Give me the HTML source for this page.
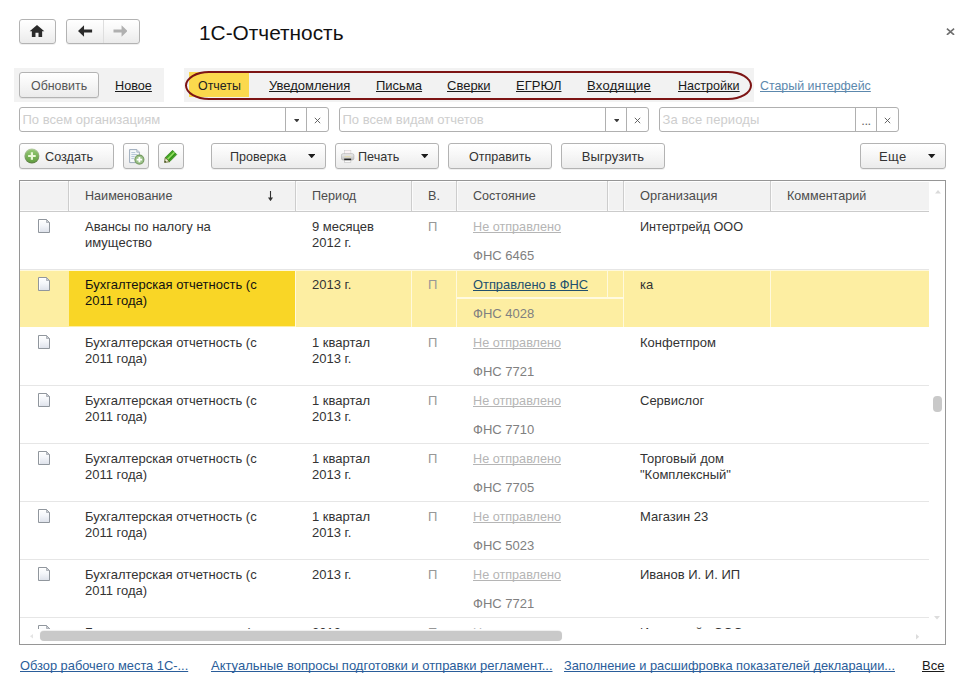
<!DOCTYPE html>
<html lang="ru">
<head>
<meta charset="utf-8">
<title>1С-Отчетность</title>
<style>
html,body{margin:0;padding:0;}
body{width:973px;height:688px;overflow:hidden;background:#fff;position:relative;
  font-family:"Liberation Sans",Arial,sans-serif;font-size:13px;color:#333;}
.abs{position:absolute;}
.sx{display:inline-block;transform-origin:0 50%;}
.btn{position:absolute;box-sizing:border-box;border:1px solid #b3b3b3;border-radius:3px;
  background:linear-gradient(#ffffff 0%,#f7f7f7 45%,#ebebeb 100%);
  box-shadow:0 1px 0 rgba(0,0,0,0.06);color:#333;white-space:nowrap;}
.btn .t{position:absolute;top:1px;line-height:24px;}
.title{position:absolute;left:198.6px;top:21px;font-size:21px;line-height:24px;color:#111;white-space:nowrap;display:inline-block;transform-origin:0 50%;transform:scaleX(.992);}
.strip{position:absolute;background:#f2f2f2;}
.lnk{position:absolute;text-decoration:underline;text-decoration-skip-ink:none;color:#1a1a1a;white-space:nowrap;line-height:16px;}
.inp{position:absolute;box-sizing:border-box;border:1px solid #b0b0b0;border-radius:3px;background:#fff;height:25px;top:107px;}
.inp .ph{position:absolute;left:2.5px;top:-0.5px;line-height:23px;color:#cecece;white-space:nowrap;}
.inp .sep{position:absolute;top:0;bottom:0;width:1px;background:#b0b0b0;}
.inp .g{position:absolute;top:0;line-height:23px;color:#555;text-align:center;}
.tri{position:absolute;width:0;height:0;border-left:3.8px solid transparent;border-right:3.8px solid transparent;border-top:4.4px solid #222;}
/* table */
#tbl{position:absolute;left:19px;top:180px;width:927px;height:465px;box-sizing:border-box;border:1px solid #969696;background:#fff;overflow:hidden;}
#tbl .hd{position:absolute;left:0;top:0;width:909px;height:30px;background:linear-gradient(#fff 0,#fff 1px,#f2f2f2 1px,#f2f2f2 28.6px,#fbfbfb 28.6px,#fbfbfb 100%);border-bottom:1px solid #cbcbcb;}
#tbl .hd span{position:absolute;top:0;line-height:30px;color:#4c4c4c;white-space:nowrap;display:inline-block;transform-origin:0 50%;transform:scaleX(.97);}
#tbl .hd i{position:absolute;top:0;height:30px;width:2px;background:linear-gradient(to right,#cdcdcd 50%,#fbfbfb 50%);}
.row{position:absolute;left:0;width:909px;height:57px;border-bottom:1px solid #e6e6e6;}
.row span{position:absolute;white-space:nowrap;line-height:16px;color:#333;}
.row .g{color:#979797;}
.row .ns{display:inline-block;transform-origin:0 50%;transform:scaleX(.973);color:#b5b5b5;text-decoration:underline;text-decoration-skip-ink:none;}
.row .fn{color:#808080;}
#tbl .row i{position:absolute;top:0;height:57px;width:1px;background:#fff9dc;}
.doc{position:absolute;left:18px;top:7px;width:12px;height:14px;}
.foot{position:absolute;top:657.5px;line-height:16px;color:#2a5d9a;text-decoration:underline;text-decoration-skip-ink:none;white-space:nowrap;}
</style>
</head>
<body>

<svg width="0" height="0" style="position:absolute"><defs><linearGradient id="dg" x1="0" y1="0" x2="0" y2="1"><stop offset="0" stop-color="#ffffff"/><stop offset="0.45" stop-color="#f4f6fa"/><stop offset="1" stop-color="#dde1ea"/></linearGradient></defs></svg>
<!-- top nav -->
<div class="btn" style="left:19px;top:19px;width:37px;height:25px;">
  <svg class="abs" style="left:9.4px;top:5.2px" width="16" height="12.4" viewBox="0 0 16 13"><path d="M8 0 L0.3 6.6 L2.6 6.6 L2.6 12.5 L6.4 12.5 L6.4 8.2 L9.6 8.2 L9.6 12.5 L13.4 12.5 L13.4 6.6 L15.7 6.6 Z" fill="#2a2a2a"/></svg>
</div>
<div class="btn" style="left:66px;top:19px;width:74px;height:25px;">
  <div class="abs" style="left:36px;top:0;width:1px;height:23px;background:#dedede"></div>
  <svg class="abs" style="left:11px;top:5.4px" width="14.6" height="12" viewBox="0 0 15 12"><path d="M6.2 0 L0 6 L6.2 12 L6.2 7.6 L14.5 7.6 L14.5 4.4 L6.2 4.4 Z" fill="#2a2a2a"/></svg>
  <svg class="abs" style="left:45.5px;top:5.4px" width="14.6" height="12" viewBox="0 0 15 12"><path d="M8.8 0 L15 6 L8.8 12 L8.8 7.6 L0.5 7.6 L0.5 4.4 L8.8 4.4 Z" fill="#b0b0b0"/></svg>
</div>
<div class="title">1С-Отчетность</div>
<svg class="abs" style="left:946.4px;top:27.6px" width="9" height="7.6" viewBox="0 0 9 7.6"><path d="M0.9 0.7 L8.1 6.9 M8.1 0.7 L0.9 6.9" stroke="#6e6e6e" stroke-width="1.6" fill="none"/></svg>

<!-- second row -->
<div class="strip" style="left:14px;top:68px;width:150px;height:34px;"></div>
<div class="btn" style="left:19px;top:72px;width:80px;height:26px;"><span class="t sx" style="left:11px;color:#555;transform:scaleX(.955)">Обновить</span></div>
<span class="lnk sx" style="left:115px;top:78px;transform:scaleX(.975)">Новое</span>

<div class="strip" style="left:184px;top:68px;width:570px;height:34px;"></div>
<div class="abs" style="left:189px;top:72px;width:60px;height:25px;background:#fbd94d;"></div>
<span class="abs sx" style="left:198px;top:78px;line-height:16px;color:#222;transform:scaleX(.955)">Отчеты</span>
<span class="lnk" style="left:269px;top:78px;">Уведомления</span>
<span class="lnk" style="left:376px;top:78px;">Письма</span>
<span class="lnk" style="left:447px;top:78px;">Сверки</span>
<span class="lnk" style="left:516px;top:78px;">ЕГРЮЛ</span>
<span class="lnk" style="left:587px;top:78px;letter-spacing:0.3px">Входящие</span>
<span class="lnk sx" style="left:678px;top:78px;transform:scaleX(.967)">Настройки</span>
<div class="abs" style="left:184.9px;top:71.2px;width:566.8px;height:29px;box-sizing:border-box;border:2.1px solid #7d1414;border-radius:24px/14.5px;"></div>
<span class="lnk sx" style="left:760px;top:78px;color:#5c88ad;transform:scaleX(.953)">Старый интерфейс</span>

<!-- filters -->
<div class="inp" style="left:19px;width:310px;">
  <span class="ph">По всем организациям</span>
  <div class="sep" style="left:265px"></div><div class="sep" style="left:286px"></div>
  <svg class="abs" style="left:273.7px;top:10.7px" width="5.6" height="3.4" viewBox="0 0 5.6 3.4"><polygon points="0,0 5.6,0 2.8,3.4" fill="#3a3a3a"/></svg>
  <svg class="abs" style="left:294px;top:8.5px" width="7" height="7" viewBox="0 0 7 7"><path d="M0.8 0.8 L6.2 6.2 M6.2 0.8 L0.8 6.2" stroke="#555" stroke-width="0.9" fill="none"/></svg>
</div>
<div class="inp" style="left:339px;width:310px;">
  <span class="ph">По всем видам отчетов</span>
  <div class="sep" style="left:265px"></div><div class="sep" style="left:286px"></div>
  <svg class="abs" style="left:273.7px;top:10.7px" width="5.6" height="3.4" viewBox="0 0 5.6 3.4"><polygon points="0,0 5.6,0 2.8,3.4" fill="#3a3a3a"/></svg>
  <svg class="abs" style="left:294px;top:8.5px" width="7" height="7" viewBox="0 0 7 7"><path d="M0.8 0.8 L6.2 6.2 M6.2 0.8 L0.8 6.2" stroke="#555" stroke-width="0.9" fill="none"/></svg>
</div>
<div class="inp" style="left:659px;width:240px;">
  <span class="ph" style="letter-spacing:0.1px">За все периоды</span>
  <div class="sep" style="left:195px"></div><div class="sep" style="left:216px"></div>
  <span class="g" style="left:196px;width:20px;top:1px;color:#666;letter-spacing:-0.4px">...</span>
  <svg class="abs" style="left:224px;top:8.5px" width="7" height="7" viewBox="0 0 7 7"><path d="M0.8 0.8 L6.2 6.2 M6.2 0.8 L0.8 6.2" stroke="#555" stroke-width="0.9" fill="none"/></svg>
</div>

<!-- toolbar -->
<div class="btn" style="left:19px;top:143px;width:95px;height:26px;">
  <svg class="abs" style="left:4px;top:4px" width="16" height="16" viewBox="0 0 16 16"><defs><linearGradient id="gp" x1="0" y1="0" x2="0" y2="1"><stop offset="0" stop-color="#b6cfa2"/><stop offset="1" stop-color="#5a7f40"/></linearGradient><linearGradient id="gq" x1="0" y1="0" x2="0" y2="1"><stop offset="0" stop-color="#93c873"/><stop offset="1" stop-color="#62a041"/></linearGradient></defs><circle cx="7.9" cy="8" r="7.5" fill="url(#gp)"/><circle cx="7.9" cy="8" r="6.3" fill="url(#gq)"/><path d="M6.8 4.2 h2.2 v2.7 h2.7 v2.2 h-2.7 v2.7 h-2.2 v-2.7 h-2.7 v-2.2 h2.7 z" fill="#ebf8da"/></svg>
  <span class="t sx" style="left:24.8px;transform:scaleX(.975)">Создать</span>
</div>
<div class="btn" style="left:123px;top:143px;width:26px;height:26px;">
  <svg class="abs" style="left:4px;top:5px" width="18" height="16" viewBox="0 0 18 16"><path d="M1.6 0.6 h7.2 l2.6 2.6 v10.4 h-9.8 z" fill="#f7fafc" stroke="#93a3b4" stroke-width="0.9"/><path d="M8.8 0.6 v2.6 h2.6" fill="#dfe6ee" stroke="#93a3b4" stroke-width="0.7"/><path d="M3.3 3.6h4M3.3 5.6h6M3.3 7.6h3.4M3.3 9.6h2.6" stroke="#a9bdd0" stroke-width="0.9"/><circle cx="11.4" cy="10.6" r="4.5" fill="#9cc38a" stroke="#74995f" stroke-width="1.1"/><path d="M10.5 7.9 h1.8 v1.8 h1.8 v1.8 h-1.8 v1.8 h-1.8 v-1.8 h-1.8 v-1.8 h1.8 z" fill="#fff"/></svg>
</div>
<div class="btn" style="left:158px;top:143px;width:26px;height:26px;">
  <svg class="abs" style="left:5.2px;top:5.8px" width="14" height="13" viewBox="0 0 14 13"><path d="M8.6 0.3 L12.7 4.6 L5.6 11.7 L1.2 7.6 Z" fill="#44a624" stroke="#2f7d18" stroke-width="0.7"/><path d="M10.4 2.3 L3.3 9.5" stroke="#93de62" stroke-width="1.5"/><path d="M11.6 3.5 L4.5 10.6" stroke="#2f8a17" stroke-width="1"/><path d="M1.2 7.6 L5.6 11.7 L0.6 12.4 Z" fill="#f6f1dc" stroke="#4d5a18" stroke-width="0.8"/><path d="M0.6 12.4 L0.9 10.8 L2.3 12.1 Z" fill="#2d3510"/></svg>
</div>
<div class="btn" style="left:211px;top:143px;width:115px;height:26px;"><span class="t sx" style="left:18px;transform:scaleX(.965)">Проверка</span><svg class="abs" style="left:95.9px;top:9.9px" width="7.4" height="4.3" viewBox="0 0 7.4 4.3"><polygon points="0,0 7.4,0 3.7,4.3" fill="#1c1c1c"/></svg></div>
<div class="btn" style="left:335px;top:143px;width:104px;height:26px;">
  <svg class="abs" style="left:5.3px;top:6.3px" width="13.3" height="12.4" viewBox="0 0 13.3 12.4"><defs><linearGradient id="pg" x1="0" y1="0" x2="0" y2="1"><stop offset="0" stop-color="#f0f0f0"/><stop offset="1" stop-color="#bdbdbd"/></linearGradient></defs><rect x="3.4" y="0.2" width="6.5" height="5" fill="#fbf3f5" stroke="#c6c6c6" stroke-width="0.5"/><rect x="0.4" y="3.7" width="12.5" height="6.3" rx="1.7" fill="url(#pg)" stroke="#a6a6a6" stroke-width="0.6"/><rect x="3.6" y="6.3" width="6.2" height="0.9" fill="#e7dca8"/><rect x="3.2" y="8.6" width="6.9" height="1.9" fill="#262626"/><rect x="3.4" y="10.4" width="6.5" height="1.8" fill="#fff" stroke="#b0b0b0" stroke-width="0.5"/></svg>
  <span class="t sx" style="left:22.4px;transform:scaleX(.97)">Печать</span><svg class="abs" style="left:84.8px;top:9.9px" width="7.4" height="4.3" viewBox="0 0 7.4 4.3"><polygon points="0,0 7.4,0 3.7,4.3" fill="#1c1c1c"/></svg>
</div>
<div class="btn" style="left:448px;top:143px;width:104px;height:26px;"><span class="t" style="left:0;width:102px;text-align:center;display:inline-block;transform:scaleX(.965)">Отправить</span></div>
<div class="btn" style="left:561px;top:143px;width:104px;height:26px;"><span class="t" style="left:0;width:102px;text-align:center;">Выгрузить</span></div>
<div class="btn" style="left:860px;top:143px;width:86px;height:26px;"><span class="t" style="left:18px;letter-spacing:0.4px">Еще</span><svg class="abs" style="left:67.2px;top:9.9px" width="7.4" height="4.3" viewBox="0 0 7.4 4.3"><polygon points="0,0 7.4,0 3.7,4.3" fill="#1c1c1c"/></svg></div>

<!-- table -->
<div id="tbl">
  <div class="hd">
    <span style="left:65px">Наименование</span><svg class="abs" style="left:247.9px;top:9.9px" width="5" height="10.2" viewBox="0 0 5 10.2"><path d="M2.5 0 V9" stroke="#333" stroke-width="1.1"/><polygon points="0,6.6 5,6.6 2.5,10.2" fill="#333"/></svg>
    <span style="left:292px">Период</span><span style="left:408px">В.</span>
    <span style="left:453px;transform:scaleX(.966)">Состояние</span><span style="left:620px;transform:scaleX(.988)">Организация</span><span style="left:767px;transform:scaleX(.968)">Комментарий</span>
    <i style="left:48px"></i><i style="left:275px"></i><i style="left:391px"></i><i style="left:436px"></i><i style="left:587px"></i><i style="left:603px"></i><i style="left:750px"></i>
  </div>
  <div class="row" style="top:31px">
    <svg class="doc" viewBox="0 0 12 14"><path d="M0.5 0.5 h8 l3 3 v10 h-11 z" fill="url(#dg)" stroke="#90969d"/><path d="M8.5 0.5 v3 h3 z" fill="#c9cdd3" stroke="#90969d" stroke-width="0.6"/><path d="M1.5 1.5 h6.5 M1.5 1.5 v11" stroke="#fff" stroke-width="0.8" fill="none"/></svg>
    <span style="left:65px;top:7px">Авансы по налогу на</span><span style="left:65px;top:23px">имущество</span>
    <span style="left:292px;top:7px">9 месяцев</span><span style="left:292px;top:23px">2012 г.</span>
    <span class="g" style="left:408px;top:7px">П</span>
    <span class="ns" style="left:453px;top:7px">Не отправлено</span>
    <span class="fn" style="left:453px;top:36px">ФНС 6465</span>
    <span class="sx" style="left:620px;top:7px;transform:scaleX(.975)">Интертрейд ООО</span>
  </div>
  <div class="row sel" style="top:89px;background:#fdeea2;border-bottom-color:#fff;box-shadow:inset 0 1px 0 #fff9dc">
    <svg class="doc" viewBox="0 0 12 14"><path d="M0.5 0.5 h8 l3 3 v10 h-11 z" fill="url(#dg)" stroke="#90969d"/><path d="M8.5 0.5 v3 h3 z" fill="#c9cdd3" stroke="#90969d" stroke-width="0.6"/><path d="M1.5 1.5 h6.5 M1.5 1.5 v11" stroke="#fff" stroke-width="0.8" fill="none"/></svg>
    <div class="abs" style="left:49px;top:1px;width:226px;height:55px;background:#f9d626;"></div>
    <i style="left:275px"></i><i style="left:391px"></i><i style="left:436px"></i><i style="left:587px;height:28px"></i><i style="left:603px"></i><i style="left:750px"></i>
    <div class="abs" style="left:437px;top:27.3px;width:167px;height:2px;background:#fffae0"></div>
    <span style="left:65px;top:7px;color:#111">Бухгалтерская отчетность (с</span><span style="left:65px;top:23px;color:#111">2011 года)</span>
    <span style="left:292px;top:7px">2013 г.</span>
    <span class="g" style="left:408px;top:7px">П</span>
    <span style="left:453px;top:7px;color:#22506e;text-decoration:underline;text-decoration-skip-ink:none;display:inline-block;transform-origin:0 50%;transform:scaleX(.99)">Отправлено в ФНС</span>
    <span class="fn" style="left:453px;top:36px">ФНС 4028</span>
    <span style="left:620px;top:7px">ка</span>
  </div>
  <div class="row" style="top:147px">
    <svg class="doc" viewBox="0 0 12 14"><path d="M0.5 0.5 h8 l3 3 v10 h-11 z" fill="url(#dg)" stroke="#90969d"/><path d="M8.5 0.5 v3 h3 z" fill="#c9cdd3" stroke="#90969d" stroke-width="0.6"/><path d="M1.5 1.5 h6.5 M1.5 1.5 v11" stroke="#fff" stroke-width="0.8" fill="none"/></svg>
    <span style="left:65px;top:7px">Бухгалтерская отчетность (с</span><span style="left:65px;top:23px">2011 года)</span>
    <span style="left:292px;top:7px">1 квартал</span><span style="left:292px;top:23px">2013 г.</span>
    <span class="g" style="left:408px;top:7px">П</span>
    <span class="ns" style="left:453px;top:7px">Не отправлено</span>
    <span class="fn" style="left:453px;top:36px">ФНС 7721</span>
    <span style="left:620px;top:7px">Конфетпром</span>
  </div>
  <div class="row" style="top:205px">
    <svg class="doc" viewBox="0 0 12 14"><path d="M0.5 0.5 h8 l3 3 v10 h-11 z" fill="url(#dg)" stroke="#90969d"/><path d="M8.5 0.5 v3 h3 z" fill="#c9cdd3" stroke="#90969d" stroke-width="0.6"/><path d="M1.5 1.5 h6.5 M1.5 1.5 v11" stroke="#fff" stroke-width="0.8" fill="none"/></svg>
    <span style="left:65px;top:7px">Бухгалтерская отчетность (с</span><span style="left:65px;top:23px">2011 года)</span>
    <span style="left:292px;top:7px">1 квартал</span><span style="left:292px;top:23px">2013 г.</span>
    <span class="g" style="left:408px;top:7px">П</span>
    <span class="ns" style="left:453px;top:7px">Не отправлено</span>
    <span class="fn" style="left:453px;top:36px">ФНС 7710</span>
    <span style="left:620px;top:7px">Сервислог</span>
  </div>
  <div class="row" style="top:263px">
    <svg class="doc" viewBox="0 0 12 14"><path d="M0.5 0.5 h8 l3 3 v10 h-11 z" fill="url(#dg)" stroke="#90969d"/><path d="M8.5 0.5 v3 h3 z" fill="#c9cdd3" stroke="#90969d" stroke-width="0.6"/><path d="M1.5 1.5 h6.5 M1.5 1.5 v11" stroke="#fff" stroke-width="0.8" fill="none"/></svg>
    <span style="left:65px;top:7px">Бухгалтерская отчетность (с</span><span style="left:65px;top:23px">2011 года)</span>
    <span style="left:292px;top:7px">1 квартал</span><span style="left:292px;top:23px">2013 г.</span>
    <span class="g" style="left:408px;top:7px">П</span>
    <span class="ns" style="left:453px;top:7px">Не отправлено</span>
    <span class="fn" style="left:453px;top:36px">ФНС 7705</span>
    <span style="left:620px;top:7px">Торговый дом</span><span style="left:620px;top:23px">&quot;Комплексный&quot;</span>
  </div>
  <div class="row" style="top:321px">
    <svg class="doc" viewBox="0 0 12 14"><path d="M0.5 0.5 h8 l3 3 v10 h-11 z" fill="url(#dg)" stroke="#90969d"/><path d="M8.5 0.5 v3 h3 z" fill="#c9cdd3" stroke="#90969d" stroke-width="0.6"/><path d="M1.5 1.5 h6.5 M1.5 1.5 v11" stroke="#fff" stroke-width="0.8" fill="none"/></svg>
    <span style="left:65px;top:7px">Бухгалтерская отчетность (с</span><span style="left:65px;top:23px">2011 года)</span>
    <span style="left:292px;top:7px">1 квартал</span><span style="left:292px;top:23px">2013 г.</span>
    <span class="g" style="left:408px;top:7px">П</span>
    <span class="ns" style="left:453px;top:7px">Не отправлено</span>
    <span class="fn" style="left:453px;top:36px">ФНС 5023</span>
    <span style="left:620px;top:7px">Магазин 23</span>
  </div>
  <div class="row" style="top:379px">
    <svg class="doc" viewBox="0 0 12 14"><path d="M0.5 0.5 h8 l3 3 v10 h-11 z" fill="url(#dg)" stroke="#90969d"/><path d="M8.5 0.5 v3 h3 z" fill="#c9cdd3" stroke="#90969d" stroke-width="0.6"/><path d="M1.5 1.5 h6.5 M1.5 1.5 v11" stroke="#fff" stroke-width="0.8" fill="none"/></svg>
    <span style="left:65px;top:7px">Бухгалтерская отчетность (с</span><span style="left:65px;top:23px">2011 года)</span>
    <span style="left:292px;top:7px">2013 г.</span>
    <span class="g" style="left:408px;top:7px">П</span>
    <span class="ns" style="left:453px;top:7px">Не отправлено</span>
    <span class="fn" style="left:453px;top:36px">ФНС 7721</span>
    <span style="left:620px;top:7px">Иванов И. И. ИП</span>
  </div>
  <div class="row" style="top:437px">
    <svg class="doc" viewBox="0 0 12 14"><path d="M0.5 0.5 h8 l3 3 v10 h-11 z" fill="url(#dg)" stroke="#90969d"/><path d="M8.5 0.5 v3 h3 z" fill="#c9cdd3" stroke="#90969d" stroke-width="0.6"/><path d="M1.5 1.5 h6.5 M1.5 1.5 v11" stroke="#fff" stroke-width="0.8" fill="none"/></svg>
    <span style="left:65px;top:7px">Бухгалтерская отчетность (с</span><span style="left:65px;top:23px">2011 года)</span>
    <span style="left:292px;top:7px">2013 г.</span>
    <span class="g" style="left:408px;top:7px">П</span>
    <span class="ns" style="left:453px;top:7px">Не отправлено</span>
    <span class="fn" style="left:453px;top:36px">ФНС 7701</span>
    <span class="sx" style="left:620px;top:7px;transform:scaleX(.975)">Интертрейд ООО</span>
  </div>
  <div class="abs" style="left:0;top:447.6px;width:925px;height:17px;background:#fff;"></div>
  <svg class="abs" style="left:915px;top:9px" width="6" height="4" viewBox="0 0 6 4"><polygon points="0,3.6 6,3.6 3,0" fill="#dadada"/></svg>
  <svg class="abs" style="left:914.4px;top:435.3px" width="6" height="4" viewBox="0 0 6 4"><polygon points="0,0 6,0 3,3.4" fill="#dcdcdc"/></svg>
  <svg class="abs" style="left:895.8px;top:453px" width="4" height="6" viewBox="0 0 4 6"><polygon points="0,0 0,5.4 3.2,2.7" fill="#dcdcdc"/></svg>
  <svg class="abs" style="left:9.5px;top:453.4px" width="4" height="5" viewBox="0 0 4 5"><polygon points="3,0 3,4.4 0,2.2" fill="#e4e4e4"/></svg>
  <div class="abs" style="left:20px;top:450.2px;width:522px;height:9.8px;border-radius:4px;background:#c9c9c9;box-shadow:0 -0.6px 0.8px rgba(200,200,200,.55)"></div>
  <div class="abs" style="left:913px;top:214.6px;width:9px;height:16.5px;border-radius:4px;background:#c9c9c9;"></div>
</div>

<!-- footer -->
<span class="foot sx" style="left:20px;transform:scaleX(.987)">Обзор рабочего места 1С-...</span>
<span class="foot" style="left:211px;">Актуальные вопросы подготовки и отправки регламент...</span>
<span class="foot sx" style="left:564px;transform:scaleX(.985)">Заполнение и расшифровка показателей декларации...</span>
<span class="foot" style="left:922px;color:#1a1a1a;">Все</span>

</body>
</html>
